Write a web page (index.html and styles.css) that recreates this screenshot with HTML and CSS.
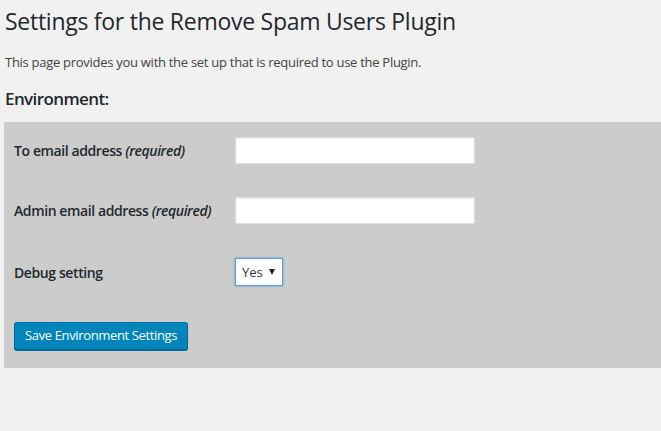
FILE: index.html
```html
<!DOCTYPE html>
<html lang="en">
<head>
<meta charset="utf-8">
<title>Settings for the Remove Spam Users Plugin</title>
<link rel="stylesheet" href="styles.css">
</head>
<body>
<div class="wrap">
  <h1 class="title">Settings for the Remove Spam Users Plugin</h1>
  <p class="intro">This page provides you with the set up that is required to use the Plugin.</p>
  <h2 class="section">Environment:</h2>
  <form class="panel">
    <div class="rows">
      <label class="label" for="to-email">To email address <em>(required)</em></label>
      <input class="text-input" id="to-email" type="text">
      <label class="label" for="admin-email">Admin email address <em>(required)</em></label>
      <input class="text-input" id="admin-email" type="text">
      <label class="label" for="debug">Debug setting</label>
      <span class="select-wrap"><select class="select" id="debug"><option>Yes</option><option>No</option></select></span>
    </div>
    <button class="button" type="button">Save Environment Settings</button>
  </form>
</div>
</body>
</html>
```
FILE: styles.css
```css
html, body {
  margin: 0;
  padding: 0;
  background: #f1f1f1;
}
body {
  font-family: "Open Sans", "Noto Sans", sans-serif;
  color: #444;
  font-size: 13px;
}
.wrap {
  padding: 0 0 0 4px;
}
.title {
  margin: 0;
  padding: 7px 0 0 1px;
  font-size: 23px;
  font-weight: 400;
  line-height: 29px;
  letter-spacing: -0.27px;
  color: #23282d;
}
.intro {
  margin: 16px 0 0 1px;
  font-size: 13px;
  line-height: 20px;
  letter-spacing: -0.28px;
  color: #444;
}
.section {
  margin: 15px 0 0 1px;
  font-size: 17px;
  font-weight: 600;
  line-height: 24px;
  letter-spacing: -0.6px;
  color: #23282d;
}
.panel {
  margin-top: 11px;
  background: #cccccc;
  padding: 0 10px 18px 10px;
}
.rows {
  display: grid;
  grid-template-columns: 221px 240px;
  grid-template-rows: 56px 64px 60px;
  align-items: center;
}
.label {
  font-size: 14px;
  font-weight: 600;
  letter-spacing: -0.4px;
  color: #23282d;
}
.label em {
  font-weight: 600;
}
.text-input {
  box-sizing: border-box;
  width: 240px;
  height: 27px;
  border: 1px solid #ddd;
  box-shadow: inset 0 1px 2px rgba(0,0,0,.07);
  background: #fff;
  margin: 0;
}
.select-wrap {
  position: relative;
  display: inline-block;
  width: 48px;
  height: 28px;
}
.select {
  box-sizing: border-box;
  appearance: none;
  -webkit-appearance: none;
  width: 48px;
  height: 28px;
  margin: 0;
  padding: 0 0 0 6px;
  border: 1px solid #5b9dd9;
  box-shadow: 0 0 2px rgba(30,140,190,.8);
  background: #fff;
  font-family: "Open Sans", "Noto Sans", sans-serif;
  font-size: 13px;
  color: #32373c;
  border-radius: 0;
  outline: none;
}
.select-wrap::after {
  content: "";
  position: absolute;
  right: 8px;
  top: 11px;
  border-left: 3.5px solid transparent;
  border-right: 3.5px solid transparent;
  border-top: 6px solid #222;
  pointer-events: none;
}
.button {
  margin-top: 20px;
  box-sizing: border-box;
  height: 28px;
  padding: 0 10px 1px;
  white-space: nowrap;
  background: #0085ba;
  border: 1px solid;
  border-color: #0073aa #006799 #006799;
  border-radius: 3px;
  box-shadow: 0 1px 0 #006799;
  color: #fff;
  font-family: "Open Sans", "Noto Sans", sans-serif;
  font-size: 13px;
  letter-spacing: -0.36px;
  line-height: 25px;
  cursor: pointer;
}
```
